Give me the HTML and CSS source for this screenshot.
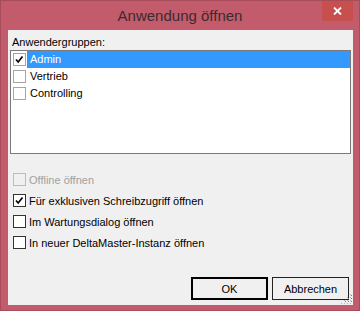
FILE: index.html
```html
<!DOCTYPE html>
<html lang="de">
<head>
  <meta charset="UTF-8">
  <title>Anwendung öffnen</title>
  <link rel="stylesheet" href="styles.css">
</head>
<body>
  <div class="window">
    <div class="titlebar">
      <span class="title">Anwendung öffnen</span>
      <div class="close-btn">
        <svg width="9" height="8" viewBox="0 0 9 8"><path d="M1 0.5 L8 7.5 M8 0.5 L1 7.5" stroke="#fff" stroke-width="1.8"/></svg>
      </div>
    </div>

    <div class="client">
      <div class="group-label">Anwendergruppen:</div>
      <div class="listbox">
        <div class="list-row selected">
          <span class="cb cb-list checked"><svg width="11" height="11" viewBox="0 0 11 11"><path d="M2 5.5 L4.2 8 L8.5 2.5" stroke="#000" stroke-width="1.7" fill="none"/></svg></span>
          <span class="row-text">Admin</span>
        </div>
        <div class="list-row">
          <span class="cb cb-list"></span>
          <span class="row-text">Vertrieb</span>
        </div>
        <div class="list-row">
          <span class="cb cb-list"></span>
          <span class="row-text">Controlling</span>
        </div>
      </div>

      <div class="options">
        <label class="option disabled"><span class="cb"></span>Offline öffnen</label>
        <label class="option"><span class="cb checked"><svg width="11" height="11" viewBox="0 0 11 11"><path d="M2 5.5 L4.2 8 L8.5 2.5" stroke="#000" stroke-width="1.7" fill="none"/></svg></span>Für exklusiven Schreibzugriff öffnen</label>
        <label class="option"><span class="cb"></span>Im Wartungsdialog öffnen</label>
        <label class="option"><span class="cb"></span>In neuer DeltaMaster-Instanz öffnen</label>
      </div>

      <div class="buttons">
        <button class="btn btn-default">OK</button>
        <button class="btn">Abbrechen</button>
      </div>

      <svg class="grip" width="11" height="11" viewBox="0 0 11 11">
        <g fill="#b4b4b4">
          <rect x="9" y="1" width="1" height="1"/>
          <rect x="6" y="4" width="1" height="1"/><rect x="9" y="4" width="1" height="1"/>
          <rect x="3" y="7" width="1" height="1"/><rect x="6" y="7" width="1" height="1"/><rect x="9" y="7" width="1" height="1"/>
          <rect x="0" y="10" width="1" height="1"/><rect x="3" y="10" width="1" height="1"/><rect x="6" y="10" width="1" height="1"/><rect x="9" y="10" width="1" height="1"/>
        </g>
        <g fill="#7a7a7a">
          <rect x="10" y="2" width="1" height="1"/>
          <rect x="7" y="5" width="1" height="1"/><rect x="10" y="5" width="1" height="1"/>
          <rect x="4" y="8" width="1" height="1"/><rect x="7" y="8" width="1" height="1"/><rect x="10" y="8" width="1" height="1"/>
        </g>
      </svg>
    </div>
  </div>
</body>
</html>
```

FILE: styles.css
```css
* {
  margin: 0;
  padding: 0;
  box-sizing: border-box;
}

body {
  background: #c15b6b;
  font-family: 'Liberation Sans', Arial, sans-serif;
  font-size: 11px;
  color: #000;
}

/* Window frame */
.window {
  width: 360px;
  height: 311px;
  border: 1px solid #a84b5a;
  background: #c25c6c;
  display: flex;
  flex-direction: column;
}

.titlebar {
  height: 29px;
  position: relative;
  display: flex;
  justify-content: center;
  align-items: center;
}

.title {
  font-size: 15px;
  color: #3b2a2e;
  padding-bottom: 1px;
}

.close-btn {
  position: absolute;
  top: 0;
  right: 6px;
  width: 31px;
  height: 20px;
  background: #c7504f;
  display: flex;
  justify-content: center;
  align-items: center;
}

/* Client area */
.client {
  flex: 1;
  margin: 0 6px 5px 7px;
  background: #f0f0f0;
  padding: 6px 2px 5px 2px;
  display: flex;
  flex-direction: column;
  position: relative;
}

.group-label {
  height: 13px;
  line-height: 13px;
  margin-left: 2px;
  margin-bottom: 1px;
}

.listbox {
  height: 104px;
  border: 1px solid #7a7a7a;
  background: #fff;
}

.list-row {
  height: 17px;
  display: flex;
  align-items: center;
}

.row-text {
  flex: 1;
  height: 17px;
  line-height: 17px;
  padding-left: 3px;
  margin-left: 1px;
}

.list-row.selected .row-text {
  background: #3399ff;
  color: #fff;
}

/* Checkboxes */
.cb {
  width: 13px;
  height: 13px;
  border: 1px solid #333;
  background: #fff;
  display: flex;
  justify-content: center;
  align-items: center;
  flex-shrink: 0;
}

.cb-list {
  margin-left: 2px;
  border-color: #a5a5a5;
}

.options {
  margin-top: 15px;
  display: flex;
  flex-direction: column;
}

.option {
  height: 21px;
  display: flex;
  align-items: center;
  padding-left: 3px;
}

.option .cb {
  margin-right: 3px;
}

.option.disabled {
  color: #a0a0a0;
}

.option.disabled .cb {
  border-color: #bcbcbc;
  background: #f0f0f0;
}

/* Buttons */
.buttons {
  margin-top: auto;
  display: flex;
  justify-content: flex-end;
  gap: 4px;
  padding-right: 2px;
}

.btn {
  width: 77px;
  height: 23px;
  border: 1px solid #222;
  background: #f0f0f0;
  font-family: 'Liberation Sans', Arial, sans-serif;
  font-size: 11px;
  color: #000;
}

.btn-default {
  border: 2px solid #000;
}

.grip {
  position: absolute;
  right: 1px;
  bottom: 1px;
}
```
